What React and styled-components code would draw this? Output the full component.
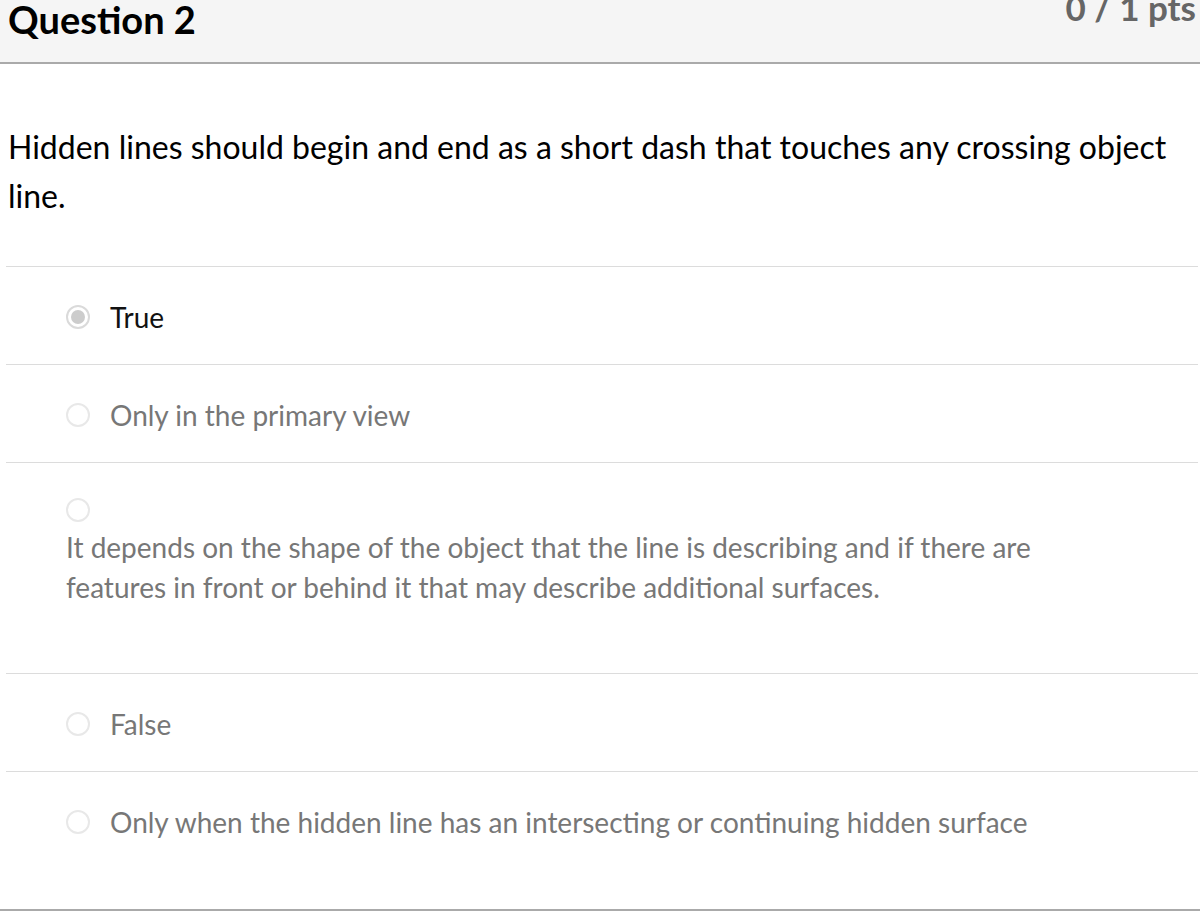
import React from "react";
import styled, { createGlobalStyle } from "styled-components";

const Global = createGlobalStyle`
  html, body { margin: 0; padding: 0; background: #fff; }
  body { font-family: Lato, "Open Sans", sans-serif; color: #000; }
`;

const Question = styled.div`
  width: 1200px;
  border-bottom: 2px solid #aaaaaa;
  padding-bottom: 40px;
`;

const Header = styled.div`
  display: flex;
  justify-content: space-between;
  align-items: flex-start;
  height: 62px;
  background: #f5f5f5;
  border-bottom: 2px solid #aaaaaa;
  padding: 0 4px 0 8px;
  overflow: hidden;
`;

const Title = styled.h2`
  margin: 0;
  font-size: 38px;
  line-height: 38px;
  font-weight: 700;
  color: #000;
`;

const Points = styled.span`
  margin-top: -10px;
  font-size: 35px;
  line-height: 35px;
  font-weight: 700;
  color: #666;
`;

const Text = styled.div`
  padding: 58px 8px 46px 8px;
  font-size: 32px;
  line-height: 49px;
  color: #000;
`;

const Answers = styled.div`
  margin: 0 2px 0 6px;
`;

const Row = styled.div`
  border-top: 1px solid #dcdcdc;
  padding: ${(p) => (p.$wrap ? "30px 0 66px 60px" : "30px 0 27px 60px")};
  display: flex;
  flex-direction: ${(p) => (p.$wrap ? "column" : "row")};
  align-items: ${(p) => (p.$wrap ? "flex-start" : "center")};
  gap: ${(p) => (p.$wrap ? "0" : "20px")};
  min-height: 40px;
`;

const RadioLine = styled.div`
  height: 34px;
  display: flex;
  align-items: center;
`;

const Radio = styled.span`
  box-sizing: border-box;
  width: 24px;
  height: 24px;
  flex: 0 0 24px;
  border-radius: 50%;
  border: 2px solid ${(p) => (p.$checked ? "#dadada" : "#e8e8e8")};
  background: #fff;
  display: flex;
  align-items: center;
  justify-content: center;
  &::after {
    content: "";
    width: 14px;
    height: 14px;
    border-radius: 50%;
    background: ${(p) => (p.$checked ? "#cccccc" : "transparent")};
  }
`;

const Label = styled.div`
  font-size: 28px;
  line-height: 40px;
  max-width: ${(p) => (p.$wrap ? "1000px" : "none")};
  color: ${(p) => (p.$selected ? "#111" : "#777")};
`;

const answers = [
  { text: "True", selected: true },
  { text: "Only in the primary view" },
  {
    text: "It depends on the shape of the object that the line is describing and if there are features in front or behind it that may describe additional surfaces.",
    wrap: true,
  },
  { text: "False" },
  { text: "Only when the hidden line has an intersecting or continuing hidden surface" },
];

export default function App() {
  return (
    <>
      <Global />
      <Question>
        <Header>
          <Title>Question 2</Title>
          <Points>0 / 1 pts</Points>
        </Header>
        <Text>
          Hidden lines should begin and end as a short dash that touches any crossing object line.
        </Text>
        <Answers>
          {answers.map((a, i) =>
            a.wrap ? (
              <Row key={i} $wrap>
                <RadioLine>
                  <Radio />
                </RadioLine>
                <Label $wrap>{a.text}</Label>
              </Row>
            ) : (
              <Row key={i}>
                <Radio $checked={a.selected} />
                <Label $selected={a.selected}>{a.text}</Label>
              </Row>
            )
          )}
        </Answers>
      </Question>
    </>
  );
}
